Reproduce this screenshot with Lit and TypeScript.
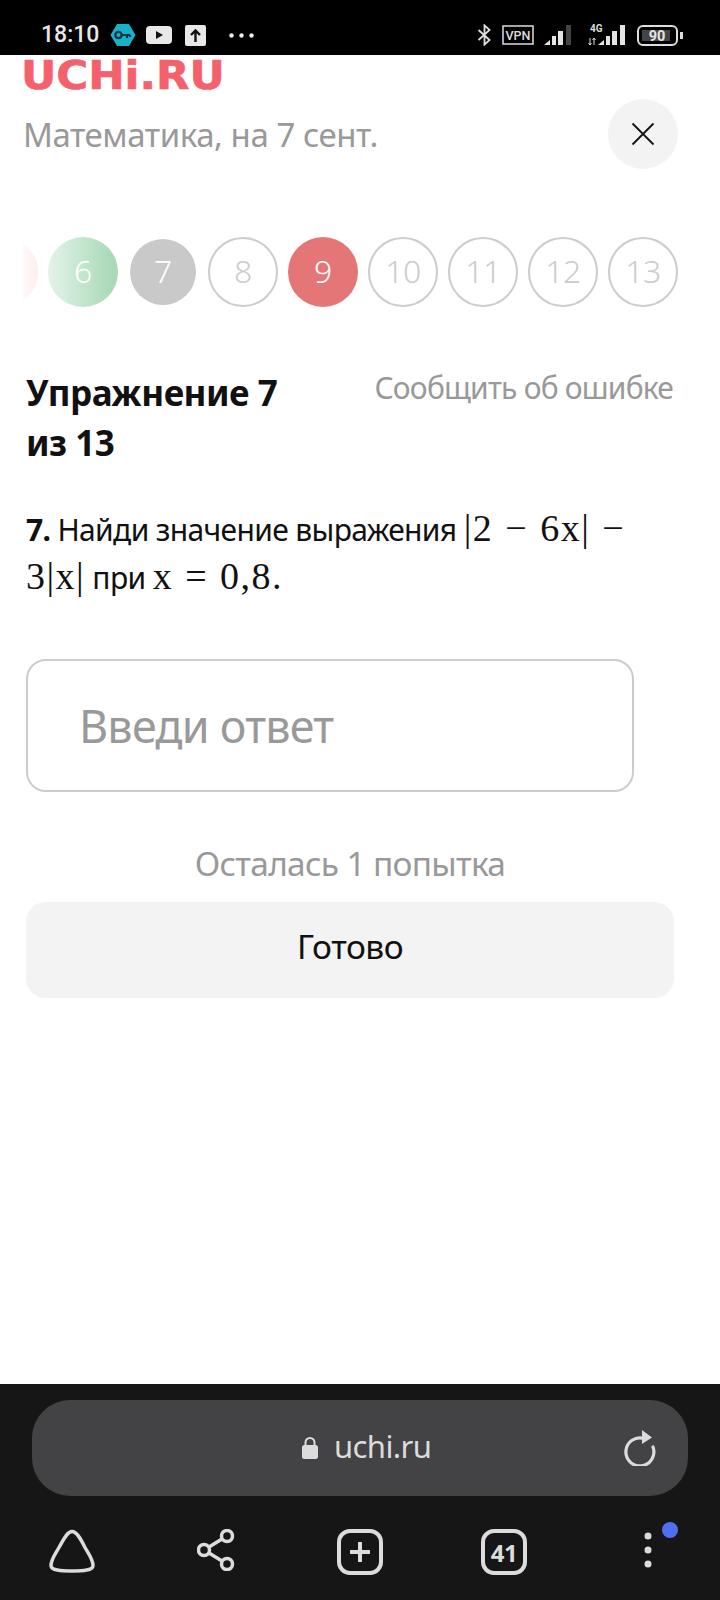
import { LitElement, html, css, svg } from "lit";
import { customElement } from "lit/decorators.js";

@customElement("app-root")
export class AppRoot extends LitElement {
  static styles = css`
    :host { display: block; width: 720px; height: 1600px; background: #fff; font-family: "Noto Sans", sans-serif; overflow: hidden; }
    .page { display: flex; flex-direction: column; height: 1600px; }
    .status { height: 55px; background: #000; color: #e8e8e8; display: flex; align-items: center; padding: 15px 0 0 41px; box-sizing: border-box; flex: none; font-family: "Roboto", sans-serif; }
    .time { font-size: 23px; font-weight: 500; width: 69px; line-height: 24px; }
    .status svg { display: block; flex: none; }
    .st-left { display: flex; align-items: center; gap: 10px; }
    .st-up { margin-left: 3px; }
    .st-dots { margin-left: 23px; }
    .spacer { flex: 1; }
    .st-right { display: flex; align-items: center; padding-right: 37px; }
    .st-vpn { margin-left: 10px; }
    .st-sig1 { margin-left: 10px; }
    .st-sig2 { margin-left: 16px; }
    .st-bat { margin-left: 11px; }
    .main { flex: 1; min-height: 0; padding: 0 0 0 23px; position: relative; }
    .logo { font-family: "DejaVu Sans", sans-serif; font-weight: 700; font-size: 39px; line-height: 42px; color: #f4606c; height: 44px; margin-left: -2px; transform: scaleX(1.115); transform-origin: left center; -webkit-text-stroke: .6px #f4606c; }
    .subrow { display: flex; align-items: center; justify-content: space-between; width: 655px; }
    .subject { font-size: 33px; color: #999; letter-spacing: -.45px; }
    .close { width: 70px; height: 70px; border-radius: 50%; background: #f3f3f3; display: flex; align-items: center; justify-content: center; }
    .steps-wrap { position: relative; width: 655px; height: 70px; margin-top: 68px; overflow: hidden; }
    .steps { display: flex; gap: 10px; align-items: center; margin-left: -55px; }
    .fade { position: absolute; left: 0; top: 0; bottom: 0; width: 90px; background: linear-gradient(90deg, rgba(255,255,255,.95), rgba(255,255,255,0)); }
    .step { width: 70px; height: 70px; flex: none; border-radius: 50%; box-sizing: border-box; display: flex; align-items: center; justify-content: center; font-size: 32px; font-weight: 300; letter-spacing: -.5px; padding-bottom: 3px; }
    .step.todo { border: 2px solid #ccc; color: #ccc; }
    .step.ok { background: #a9d9b7; color: #fff; }
    .step.bad { background: #f0a9a9; color: #fff; }
    .step.cur { background: #c9c9c9; color: #fff; width: 66px; height: 66px; margin: 0 2px; }
    .step.red { background: #e57678; color: #fff; }
    .task { padding-left: 3px; width: 650px; }
    .headrow { display: flex; justify-content: space-between; margin-top: 61px; align-items: flex-start; }
    h1 { margin: 0; font-size: 35px; line-height: 50px; font-weight: 700; color: #111; letter-spacing: -.5px; width: 300px; }
    .report { font-size: 30px; color: #999; letter-spacing: -.8px; line-height: 40px; padding-right: 3px; }
    .q { margin: 37px 0 0; font-size: 30px; line-height: 47px; color: #111; letter-spacing: -.65px; width: 610px; }
    .q b { font-weight: 700; }
    .m { font-family: "Liberation Serif", serif; font-size: 38px; letter-spacing: 1.500px; word-spacing: 1px; }
    .input { width: 608px; height: 133px; box-sizing: border-box; border: 2px solid #ccc; border-radius: 20px; margin-top: 58px; display: flex; align-items: center; padding: 0 0 0 51px; font-size: 44.800px; color: #999; letter-spacing: -.75px; }
    .left { width: 648px; text-align: center; font-size: 33.500px; color: #999; letter-spacing: -.7px; line-height: 44px; margin-top: 49px; }
    .btn { width: 648px; height: 96px; margin-top: 17px; border-radius: 20px; background: #f3f3f3; display: flex; align-items: center; justify-content: center; font-size: 33.500px; color: #111; letter-spacing: -.5px; padding-bottom: 8px; box-sizing: border-box; }
    .browser { height: 216px; flex: none; background: #161616; padding-top: 16px; box-sizing: border-box; }
    .url { height: 96px; width: 656px; margin-left: 32px; border-radius: 38px; background: #434346; display: flex; align-items: center; position: relative; padding: 0 0 4px 270px; box-sizing: border-box; color: #dcdcdc; font-size: 31px; letter-spacing: -.6px; }
    .url .lock { margin-right: 16px; margin-top: 4px; }
    .reload { position: absolute; right: 32px; top: 30px; }
    .nav { display: grid; grid-template-columns: repeat(5, 144px); justify-items: center; align-items: start; margin-top: 33px; }
    .badge { color: #dcdcdc; font-size: 24px; font-weight: 700; width: 46px; height: 46px; box-sizing: border-box; border: 4px solid #dcdcdc; border-radius: 13px; display: flex; align-items: center; justify-content: center; letter-spacing: -.5px; }
    .more { position: relative; width: 8px; height: 46px; }
    .pip { position: absolute; left: 18px; top: -7px; width: 16px; height: 16px; border-radius: 50%; background: #4f6ef2; }
    .nav svg { display: block; }
  `;

  private signal(on: number) {
    return svg`
      <path d="M0 20l6-5v5z" fill="#e4e4e4"/>
      <rect x="8" y="11" width="4" height="9" fill=${on > 1 ? "#e4e4e4" : "#555"}/>
      <rect x="14" y="6" width="5" height="14" fill=${on > 2 ? "#e4e4e4" : "#555"}/>
      <rect x="22" y="0" width="5" height="20" fill=${on > 3 ? "#e4e4e4" : "#444"}/>`;
  }

  render() {
    const steps: [string, string][] = [["", "bad"], ["6", "ok"], ["7", "cur"], ["8", "todo"], ["9", "red"], ["10", "todo"], ["11", "todo"], ["12", "todo"], ["13", "todo"]];
    return html`
      <div class="page">
        <div class="status">
          <div class="time">18:10</div>
          <div class="st-left">
            <svg width="26" height="24" viewBox="0 0 26 24"><path d="M7 1h12l6.500 11L19 23H7L.5 12z" fill="#18b1c9"/><circle cx="8.500" cy="12" r="3.200" fill="none" stroke="#14333c" stroke-width="2.200"/><path d="M11 12h9M17 12v3M20 12v2" stroke="#14333c" stroke-width="2.200" fill="none"/></svg>
            <svg width="26" height="18" viewBox="0 0 26 18"><rect width="26" height="18" rx="4" fill="#e8e8e8"/><path d="M10 5l7 4-7 4z" fill="#111"/></svg>
            <svg class="st-up" width="21" height="21" viewBox="0 0 21 21"><rect width="21" height="21" rx="2" fill="#e8e8e8"/><path d="M10.500 17V6M6 10l4.500-4.500L15 10" stroke="#111" stroke-width="2.400" fill="none"/></svg>
          </div>
          <svg class="st-dots" width="25" height="5" viewBox="0 0 25 5"><circle cx="2.500" cy="2.500" r="2.200" fill="#eee"/><circle cx="12.500" cy="2.500" r="2.200" fill="#eee"/><circle cx="22.500" cy="2.500" r="2.200" fill="#eee"/></svg>
          <div class="spacer"></div>
          <div class="st-right">
            <svg width="15" height="22" viewBox="0 0 16 24" fill="none" stroke="#ddd" stroke-width="2"><path d="M1.500 6.500l12 11-5.500 5V1.500l5.500 5-12 11"/></svg>
            <svg class="st-vpn" width="32" height="20" viewBox="0 0 32 20"><rect x="1" y="1" width="30" height="18" fill="none" stroke="#ddd" stroke-width="1.500"/><text x="16" y="15" text-anchor="middle" font-size="12.500" font-weight="500" fill="#ddd" font-family="Roboto">VPN</text></svg>
            <svg class="st-sig1" width="28" height="20" viewBox="0 0 28 20">${this.signal(3)}</svg>
            <svg class="st-sig2" width="38" height="24" viewBox="0 0 38 24">
              <text x="2" y="9" font-size="10" font-weight="700" fill="#ddd" font-family="Roboto">4G</text>
              <path d="M2 15v7M0.500 20l1.500 2 1.500-2M6 22v-7M4.500 17L6 15l1.500 2" stroke="#ddd" stroke-width="1" fill="none"/>
              <g transform="translate(10 2)">${this.signal(4)}</g>
            </svg>
            <svg class="st-bat" width="46" height="21" viewBox="0 0 46 21"><rect x="1" y="1" width="39" height="19" rx="5" fill="none" stroke="#ddd" stroke-width="2"/><rect x="5" y="5" width="28" height="11" fill="#444"/><text x="20" y="16" text-anchor="middle" font-size="14.500" font-weight="700" fill="#e4e4e4" font-family="Roboto">90</text><rect x="43" y="7" width="3" height="7" fill="#ddd"/></svg>
          </div>
        </div>
        <div class="main">
          <div class="logo">UCHi.RU</div>
          <div class="subrow">
            <div class="subject">Математика, на 7 сент.</div>
            <div class="close"><svg width="24" height="24" viewBox="0 0 24 24"><path d="M1.500 1.500l21 21M22.500 1.500l-21 21" stroke="#111" stroke-width="1.800" fill="none"/></svg></div>
          </div>
          <div class="steps-wrap">
            <div class="steps">
              ${steps.map(([n, c]) => html`<div class="step ${c}">${n}</div>`)}
            </div>
            <div class="fade"></div>
          </div>
          <div class="task">
            <div class="headrow">
              <h1>Упражнение 7 из 13</h1>
              <div class="report">Сообщить об ошибке</div>
            </div>
            <p class="q"><b>7.</b> Найди значение выражения <span class="m">|2 − 6x| −</span> <span class="m">3|x|</span> при <span class="m">x = 0,8.</span></p>
            <div class="input">Введи ответ</div>
            <div class="left">Осталась 1 попытка</div>
            <div class="btn">Готово</div>
          </div>
        </div>
        <div class="browser">
          <div class="url">
            <svg class="lock" width="16" height="22" viewBox="0 0 16 22"><rect x="0" y="8" width="16" height="14" rx="2.500" fill="#dcdcdc"/><path d="M3.500 9V5.500a4.500 4.500 0 0 1 9 0V9" fill="none" stroke="#dcdcdc" stroke-width="2"/></svg>
            uchi.ru
            <svg class="reload" width="32" height="36" viewBox="0 0 32 36" fill="none"><path d="M20 8.500A14 14 0 1 0 29 17" stroke="#dcdcdc" stroke-width="3.200" stroke-linecap="round"/><path d="M18 0l10 7.500L18 14z" fill="#dcdcdc"/></svg>
          </div>
          <div class="nav">
            <svg width="46" height="44" viewBox="0 0 46 44" fill="none"><path d="M23 2.500c5 0 9 8 13 16 4 7 8 12 8 18 0 5-10 5.500-21 5.500S2 41.500 2 36.500c0-6 4-11 8-18s8-16 13-16z" stroke="#dcdcdc" stroke-width="3.500"/></svg>
            <svg width="38" height="42" viewBox="0 0 38 42" fill="none" stroke="#dcdcdc" stroke-width="3.500"><circle cx="30" cy="7" r="5.500"/><circle cx="7" cy="21" r="5.500"/><circle cx="30" cy="35" r="5.500"/><path d="M12 18l13-8M12 24l13 8"/></svg>
            <svg width="46" height="46" viewBox="0 0 46 46" fill="none" stroke="#dcdcdc"><rect x="2" y="2" width="42" height="42" rx="11" stroke-width="4"/><path d="M23 13v20M13 23h20" stroke-width="4"/></svg>
            <div class="badge">41</div>
            <div class="more">
              <svg width="8" height="42" viewBox="0 0 8 42"><circle cx="4" cy="7" r="3.500" fill="#dcdcdc"/><circle cx="4" cy="21" r="3.500" fill="#dcdcdc"/><circle cx="4" cy="35" r="3.500" fill="#dcdcdc"/></svg>
              <div class="pip"></div>
            </div>
          </div>
        </div>
      </div>
    `;
  }
}
